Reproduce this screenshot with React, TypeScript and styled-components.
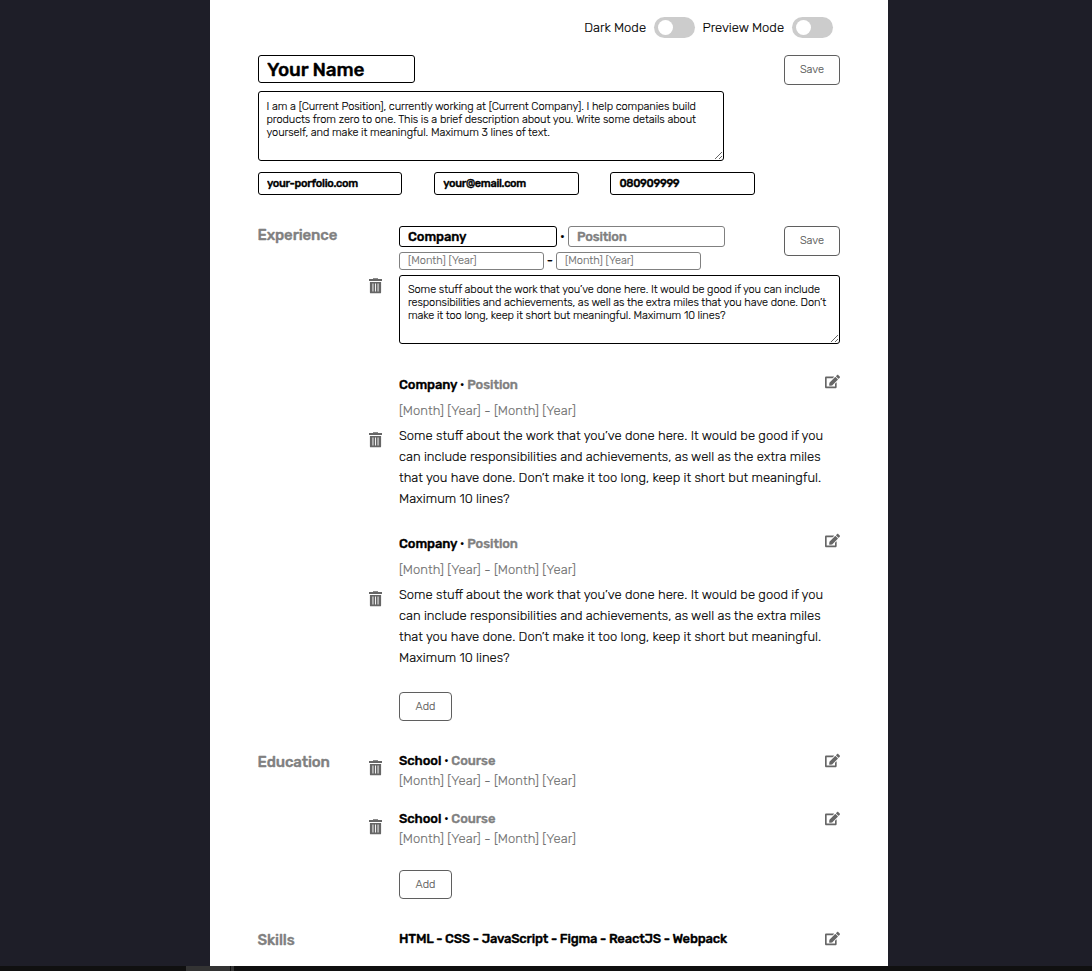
import React from "react";
import styled, { createGlobalStyle, css } from "styled-components";
import { FaEdit } from "react-icons/fa";

const GlobalStyle = createGlobalStyle`
  * { box-sizing: border-box; }
  body { margin: 0; background: #1e1e28; overflow: hidden; font-family: Rubik, Roboto, sans-serif; font-size: 13px; font-weight: 300; color: #000; -webkit-text-stroke: 0.15px currentColor; }
  input, textarea, button { font-family: inherit; font-weight: inherit; -webkit-text-stroke: inherit; }
`;

const heavy = css`
  font-weight: 500;
  -webkit-text-stroke: 0.35px currentColor;
`;

const Screen = styled.div`
  height: 971px;
  display: flex;
  flex-direction: column;
`;

const Page = styled.main`
  width: 678px;
  height: 966px;
  margin-left: 210px;
  padding: 17px 48px 0;
  background: #fff;
  overflow: hidden;
`;

const Taskbar = styled.footer`
  height: 5px;
  background: #101010;
  padding-left: 186px;
  display: flex;
  gap: 1px;
`;
const TaskTab = styled.div<{ $w: number }>`
  width: ${(p) => p.$w}px;
  background: #333;
`;

const Modes = styled.div`
  height: 21px;
  display: flex;
  justify-content: flex-end;
  align-items: center;
  padding-right: 7px;
`;
const ModeLabel = styled.span`
  line-height: 21px;
  margin: 0 8px 0 7.5px;
  white-space: nowrap;
`;
const Toggle = styled.div`
  width: 41px;
  height: 21px;
  border-radius: 11px;
  background: #ccc;
  padding: 3px 4px;
`;
const Knob = styled.div`
  width: 15px;
  height: 15px;
  border-radius: 50%;
  background: #fff;
`;

const Row = styled.div<{ $top?: number; $gap?: number }>`
  display: flex;
  align-items: flex-start;
  margin-top: ${(p) => p.$top ?? 0}px;
  gap: ${(p) => p.$gap ?? 0}px;
`;

const Profile = styled.div`
  display: flex;
  justify-content: space-between;
  align-items: flex-start;
  margin-top: 17px;
`;

const Button = styled.button<{ $w: number; $h: number }>`
  width: ${(p) => p.$w}px;
  height: ${(p) => p.$h}px;
  flex: none;
  padding: 0 0 1px;
  border: 1px solid #5f5f5f;
  border-radius: 4px;
  background: #fff;
  color: #5a5a5a;
  font-size: 11px;
`;

const Field = styled.input<{ $w: number; $h: number; $size: number; $bold?: boolean; $muted?: boolean; $track?: number; $lift?: number }>`
  width: ${(p) => p.$w}px;
  height: ${(p) => p.$h}px;
  padding: 0 8px ${(p) => p.$lift ?? 0}px;
  border: 1px solid ${(p) => (p.$muted ? "#808080" : "#000")};
  border-radius: 3px;
  color: ${(p) => (p.$muted ? (p.$bold ? "#808080" : "#707070") : "#000")};
  font-size: ${(p) => p.$size}px;
  letter-spacing: ${(p) => p.$track ?? 0}px;
  ${(p) => p.$bold && heavy}
  outline: none;
`;

const Area = styled.textarea<{ $w: number; $h: number; $top: number; $left: number; $track: number }>`
  display: block;
  width: ${(p) => p.$w}px;
  height: ${(p) => p.$h}px;
  padding: ${(p) => p.$top}px 0 0 ${(p) => p.$left}px;
  border: 1px solid #000;
  border-radius: 3px;
  font-size: 11px;
  line-height: 13px;
  letter-spacing: ${(p) => p.$track}px;
  color: #000;
  white-space: pre;
  overflow: hidden;
  outline: none;
`;

const Section = styled.section<{ $top: number }>`
  display: grid;
  grid-template-columns: 141px 441px;
  margin-top: ${(p) => p.$top}px;
`;
const SectionTitle = styled.h2`
  margin: 0 0 0 -0.5px;
  font-size: 15px;
  line-height: 18px;
  letter-spacing: -0.13px;
  color: #808080;
  ${heavy}
`;

const Entry = styled.article<{ $top?: number; $trash: number }>`
  display: grid;
  grid-template-columns: 30px 441px;
  margin-left: -30px;
  margin-top: ${(p) => p.$top ?? 0}px;
  > svg { margin-top: ${(p) => p.$trash}px; }
`;
const EntryHead = styled.div<{ $icon?: number; $top?: number }>`
  display: flex;
  justify-content: space-between;
  align-items: flex-start;
  margin-top: ${(p) => p.$top ?? 0}px;
  > svg { margin-top: ${(p) => p.$icon ?? 0}px; }
`;
const Heading = styled.div<{ $track?: number }>`
  ${heavy}
  line-height: 18px;
  letter-spacing: ${(p) => p.$track ?? -0.08}px;
  white-space: nowrap;
`;
const Muted = styled.span`
  color: #808080;
`;
const Dot = styled.span`
  font-weight: 400;
  -webkit-text-stroke: 0;
`;
const Dates = styled.div<{ $top: number }>`
  margin-top: ${(p) => p.$top}px;
  line-height: 16px;
  letter-spacing: 0.05px;
  color: #707070;
`;
const Body = styled.div`
  margin-top: 6px;
`;
const Line = styled.div`
  line-height: 21px;
  white-space: nowrap;
`;
const Separator = styled.span<{ $w: number; $line: number }>`
  width: ${(p) => p.$w}px;
  text-align: center;
  line-height: ${(p) => p.$line}px;
  font-weight: 400;
`;

const TrashIcon = () => (
  <svg width="13" height="16" viewBox="0 0 13 16" fill="#666">
    <path d="M0 1h4V.3h5V1h4v2H0zM.9 4h11.200v10.400q0 .9-.9.9H1.800q-.9 0-.9-.9zM3.500 5.500v8h.9v-8zM6.050 5.500v8h.9v-8zM8.600 5.500v8h.9v-8z" fillRule="evenodd" />
  </svg>
);
const EditIcon = () => <FaEdit size={15} color="#666" />;

const lines = [
  "Some stuff about the work that you’ve done here. It would be good if you",
  "can include responsibilities and achievements, as well as the extra miles",
  "that you have done. Don’t make it too long, keep it short but meaningful.",
  "Maximum 10 lines?",
];

const Job = ({ top }: { top: number }) => (
  <Entry $top={top} $trash={56}>
    <TrashIcon />
    <div>
      <EntryHead $icon={-2}>
        <Heading>Company <Dot>·</Dot> <Muted>Position</Muted></Heading>
        <EditIcon />
      </EntryHead>
      <Dates $top={9}>[Month] [Year] - [Month] [Year]</Dates>
      <Body>
        {lines.map((text) => <Line key={text}>{text}</Line>)}
      </Body>
    </div>
  </Entry>
);

const School = ({ top, trash }: { top: number; trash: number }) => (
  <Entry $top={top} $trash={trash}>
    <TrashIcon />
    <div>
      <EntryHead $icon={1}>
        <Heading>School <Dot>·</Dot> <Muted>Course</Muted></Heading>
        <EditIcon />
      </EntryHead>
      <Dates $top={3}>[Month] [Year] - [Month] [Year]</Dates>
    </div>
  </Entry>
);

export default function App() {
  return (
    <Screen>
      <GlobalStyle />
      <Page>
        <Modes>
          <ModeLabel>Dark Mode</ModeLabel>
          <Toggle><Knob /></Toggle>
          <ModeLabel>Preview Mode</ModeLabel>
          <Toggle><Knob /></Toggle>
        </Modes>
        <Profile>
          <div>
            <Field $w={157} $h={28} $size={19} $bold $track={-0.1} defaultValue="Your Name" />
            <Row $top={8}>
              <Area $w={466} $h={70} $top={8} $left={7.5} $track={-0.075} spellCheck={false} defaultValue={"I am a [Current Position], currently working at [Current Company]. I help companies build\nproducts from zero to one. This is a brief description about you. Write some details about\nyourself, and make it meaningful. Maximum 3 lines of text."} />
            </Row>
            <Row $top={11} $gap={31.8}>
              <Field $w={144.4} $h={23} $size={11} $bold $track={-0.28} defaultValue="your-porfolio.com" />
              <Field $w={144.4} $h={23} $size={11} $bold $track={-0.32} defaultValue="your@email.com" />
              <Field $w={144.4} $h={23} $size={11} $bold $track={-0.32} defaultValue="080909999" />
            </Row>
          </div>
          <Button $w={56} $h={30}>Save</Button>
        </Profile>
        <Section $top={31}>
          <SectionTitle>Experience</SectionTitle>
          <div>
            <Entry $trash={52}>
              <TrashIcon />
              <div>
                <EntryHead>
                  <div>
                    <Row>
                      <Field $w={158} $h={21} $size={13} $bold $track={-0.1} defaultValue="Company" />
                      <Separator $w={11} $line={21}>·</Separator>
                      <Field $w={157} $h={21} $size={13} $bold $muted $track={-0.2} defaultValue="Position" />
                    </Row>
                    <Row $top={5}>
                      <Field $w={145} $h={18} $size={11} $muted $lift={1} defaultValue="[Month] [Year]" />
                      <Separator $w={12} $line={18}>-</Separator>
                      <Field $w={145} $h={18} $size={11} $muted $lift={1} defaultValue="[Month] [Year]" />
                    </Row>
                  </div>
                  <Button $w={56} $h={30}>Save</Button>
                </EntryHead>
                <Row $top={5}>
                  <Area $w={441} $h={69} $top={7} $left={8} $track={-0.095} spellCheck={false} defaultValue={"Some stuff about the work that you’ve done here. It would be good if you can include\nresponsibilities and achievements, as well as the extra miles that you have done. Don’t\nmake it too long, keep it short but meaningful. Maximum 10 lines?"} />
                </Row>
              </div>
            </Entry>
            <Job top={32} />
            <Job top={26} />
            <Row $top={24}><Button $w={53} $h={29}>Add</Button></Row>
          </div>
        </Section>
        <Section $top={32}>
          <SectionTitle>Education</SectionTitle>
          <div>
            <School top={-1} trash={8} />
            <School top={21} trash={9} />
            <Row $top={23}><Button $w={53} $h={29}>Add</Button></Row>
          </div>
        </Section>
        <Section $top={32}>
          <SectionTitle>Skills</SectionTitle>
          <EntryHead $icon={1} $top={-1}>
            <Heading $track={-0.19}>HTML - CSS - JavaScript - Figma - ReactJS - Webpack</Heading>
            <EditIcon />
          </EntryHead>
        </Section>
      </Page>
      <Taskbar><TaskTab $w={44} /><TaskTab $w={3} /></Taskbar>
    </Screen>
  );
}
